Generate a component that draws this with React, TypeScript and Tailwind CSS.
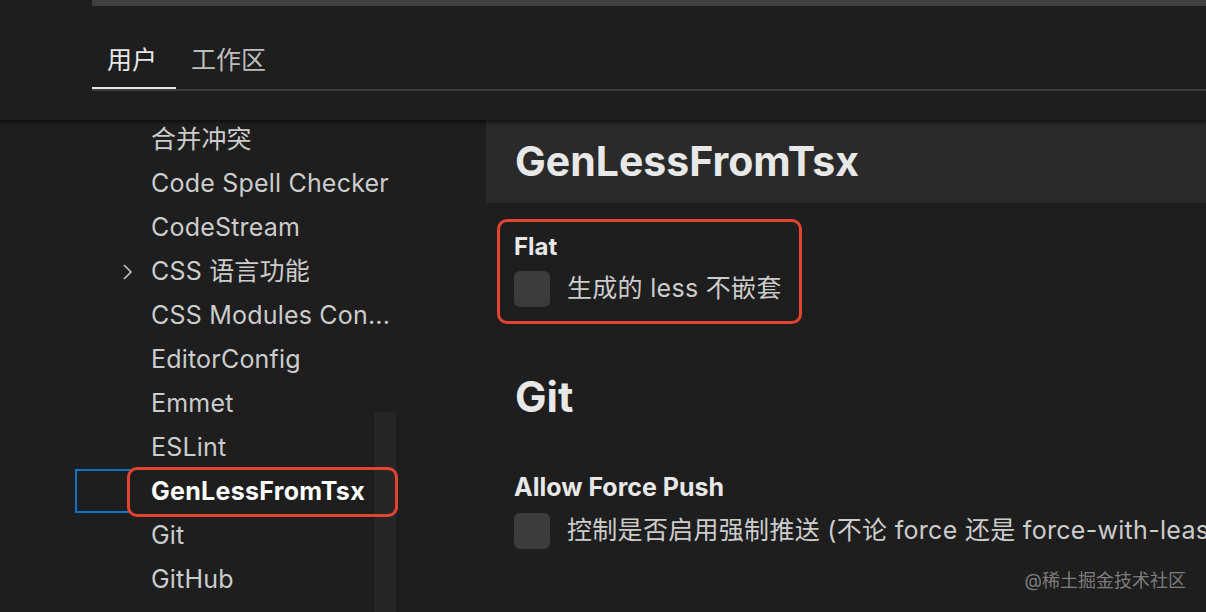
import React from "react";

const toc = [
  "合并冲突",
  "Code Spell Checker",
  "CodeStream",
  "CSS 语言功能",
  "CSS Modules Con...",
  "EditorConfig",
  "Emmet",
  "ESLint",
  "GenLessFromTsx",
  "Git",
  "GitHub",
];

function Checkbox() {
  return <div className="w-[36px] h-[36px] shrink-0 rounded-[6px] bg-[#3c3c3c]" />;
}

export default function App() {
  return (
    <div className="relative w-[1206px] h-[612px] overflow-hidden bg-[#1e1e1e] flex flex-col font-['Inter','Noto_Sans_CJK_SC',sans-serif]">
      {/* header with scope tabs */}
      <header className="relative z-10 h-[120px] shrink-0 bg-[#1e1e1e] shadow-[0_2px_4px_rgba(0,0,0,0.6)]">
        <div className="ml-[92px] h-[6px] bg-[#404040]" />
        <div className="ml-[92px] mt-[35px] flex border-b-2 border-[#3c3c3c]">
          <div className="w-[84px] h-[48px] -mb-[2px] border-b-2 border-[#e7e7e7] pl-[15px] text-[25px] leading-[38px] text-[#e7e7e7]">
            用户
          </div>
          <div className="h-[48px] pl-[15px] text-[25px] leading-[38px] text-[#bdbdbd]">工作区</div>
        </div>
      </header>

      {/* scrollbar slider */}
      <div className="absolute left-[374px] top-[412px] w-[22px] h-[200px] bg-[#262626]" />

      <div className="relative flex flex-1 min-h-0">
        {/* table of contents */}
        <nav className="w-[486px] shrink-0 -mt-[2px]">
          {toc.map((item) => {
            const selected = item === "GenLessFromTsx";
            return (
              <div key={item} className="relative h-[44px] flex items-center">
                {item === "CSS 语言功能" && (
                  <svg className="absolute left-[120px] top-[13px]" width="16" height="18" viewBox="0 0 16 18">
                    <path d="M4 2 L11 9 L4 16" fill="none" stroke="#c5c5c5" strokeWidth="1.6" />
                  </svg>
                )}
                {selected && (
                  <>
                    <div className="absolute left-[75px] top-[-1px] w-[56px] h-[44px] border-2 border-r-0 border-[#0a74c9]" />
                    <div className="absolute left-[127px] top-[-3px] w-[271px] h-[50px] rounded-[10px] border-[3px] border-[#e3432f]" />
                  </>
                )}
                <span
                  className={
                    selected
                      ? "relative pl-[151px] text-[25px] tracking-[0.3px] font-bold text-white whitespace-nowrap"
                      : "relative pl-[151px] text-[25px] tracking-[0.2px] text-[#cccccc] whitespace-nowrap"
                  }
                >
                  {item}
                </span>
              </div>
            );
          })}
        </nav>

        {/* settings list */}
        <main className="flex-1 min-w-0 overflow-hidden">
          <div className="h-[83px] bg-[#2a2a2a] flex items-center pl-[29px]">
            <h2 className="text-[41px] font-bold text-[#e8e8e8]">GenLessFromTsx</h2>
          </div>

          <div className="mt-[16px] ml-[11px] w-[305px] h-[105px] rounded-[10px] border-[3px] border-[#e3432f] pl-[14px] pt-[10px]">
            <div className="text-[24px] leading-[30px] font-bold text-[#e8e8e8]">Flat</div>
            <div className="mt-[8px] flex items-center gap-[17px]">
              <Checkbox />
              <span className="text-[25px] tracking-[0.3px] text-[#cccccc] whitespace-nowrap">生成的 less 不嵌套</span>
            </div>
          </div>

          <h2 className="mt-[48px] pl-[29px] text-[42px] leading-[50px] font-bold text-[#e8e8e8]">Git</h2>

          <div className="mt-[50px] pl-[28px]">
            <div className="text-[25px] leading-[30px] font-bold text-[#e8e8e8]">Allow Force Push</div>
            <div className="mt-[10px] flex items-center gap-[17px]">
              <Checkbox />
              <span className="text-[25px] tracking-[0.3px] text-[#cccccc] whitespace-nowrap">
                控制是否启用强制推送 (不论 force 还是 force-with-lease)
              </span>
            </div>
          </div>
        </main>
      </div>

      {/* watermark */}
      <div className="absolute right-[20px] bottom-[18px] text-[18px] text-[#7c7c7c]">@稀土掘金技术社区</div>
    </div>
  );
}
